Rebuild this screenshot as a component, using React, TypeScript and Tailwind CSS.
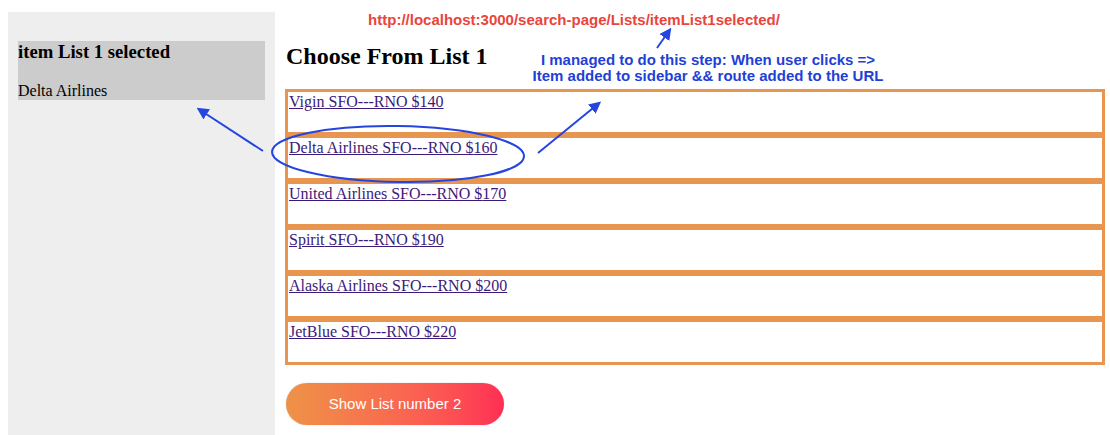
import { useState } from "react";

const flights = [
  { name: "Vigin", price: 140 },
  { name: "Delta Airlines", price: 160 },
  { name: "United Airlines", price: 170 },
  { name: "Spirit", price: 190 },
  { name: "Alaska Airlines", price: 200 },
  { name: "JetBlue", price: 220 },
];

export default function App() {
  const [selected, setSelected] = useState("Delta Airlines");

  return (
    <div className="relative w-[1110px] h-[435px] overflow-hidden bg-white pl-[8px] pt-[12px] flex font-['Liberation_Serif',serif] text-black">
      {/* sidebar */}
      <aside className="w-[267px] h-[423px] bg-[#eeeeee] pl-[10px] pr-[10px] pt-[29px] shrink-0">
        <div className="bg-[#cccccc] h-[59px]">
          <h3 className="text-[18.7px] font-bold leading-[22px]">item List 1 selected</h3>
          <p className="mt-[19px] text-[16px] leading-[18px]">{selected}</p>
        </div>
      </aside>

      {/* main list */}
      <main className="ml-[10px] w-[820px] pt-[30px]">
        <h2 className="text-[24px] font-bold leading-[28px] pl-px">Choose From List 1</h2>

        <ul className="mt-[19px]">
          {flights.map((f) => (
            <li
              key={f.name}
              className="h-[46px] border-[3px] border-[#e8954f] pl-px leading-[19px]"
            >
              <a
                href="#"
                onClick={(e) => {
                  e.preventDefault();
                  setSelected(f.name);
                }}
                className="text-[16px] text-[#3b1a7a] underline"
              >
                {f.name} SFO---RNO ${f.price}
              </a>
            </li>
          ))}
        </ul>

        <button className="mt-[18px] ml-px w-[218px] h-[42px] rounded-full bg-gradient-to-r from-[#ee9247] to-[#ff2d55] text-white text-[15px] font-['Liberation_Sans',sans-serif] shadow-[0_0_1px_rgba(0,0,0,0.4)]">
          Show List number 2
        </button>
      </main>

      {/* annotations */}
      <div className="absolute left-[324px] top-[11px] w-[500px] text-center text-[15px] font-bold leading-[18px] text-[#e8453c] font-['Liberation_Sans',sans-serif]">
        http://localhost:3000/search-page/Lists/itemList1selected/
      </div>
      <div className="absolute left-[458px] top-[52px] w-[500px] text-center text-[15px] font-bold leading-[16px] text-[#1f3fd6] font-['Liberation_Sans',sans-serif]">
        I managed to do this step: When user clicks =&gt;
        <br />
        Item added to sidebar &amp;&amp; route added to the URL
      </div>

      <svg className="absolute left-0 top-0 pointer-events-none" width="1110" height="435">
        <defs>
          <marker id="ah" markerWidth="6" markerHeight="6" refX="4" refY="3" orient="auto">
            <path d="M0,0 L6,3 L0,6 Z" fill="#2445e0" />
          </marker>
        </defs>
        <g stroke="#2445e0" strokeWidth="2" fill="none">
          <line x1="657" y1="48" x2="669" y2="31" markerEnd="url(#ah)" />
          <line x1="538" y1="153" x2="598" y2="104" markerEnd="url(#ah)" />
          <line x1="263" y1="151" x2="200" y2="110" markerEnd="url(#ah)" />
          <ellipse cx="398" cy="154" rx="126" ry="28" transform="rotate(1 398 154)" />
        </g>
      </svg>
    </div>
  );
}
